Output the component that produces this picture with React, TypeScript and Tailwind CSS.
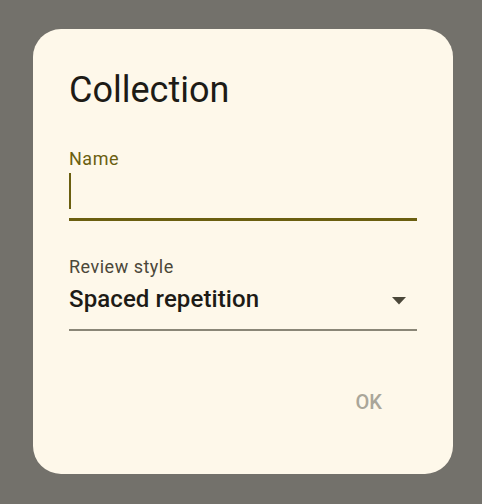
import { useState } from 'react';

const options = ['Spaced repetition', 'Sequential', 'Random'];

const App = () => {
    const [name, setName] = useState('');
    const [style] = useState(options[0]);

    return (
        <div className="w-[482px] h-[504px] bg-[#73716b] pt-[29px] pl-[33px] font-['Roboto',sans-serif]">
            <div className="w-[420px] h-[445px] bg-[#fef8ea] rounded-[28px] pt-[39px] px-9 flex flex-col">
                <h1 className="text-[36px] leading-[44px] text-[#1d1b16] font-normal">Collection</h1>

                <div className="mt-[35px] flex flex-col">
                    <label className="text-[18px] leading-[24px] text-[#6b5f10] tracking-[0.5px]">Name</label>
                    <div className="relative h-[50px] border-b-[3px] border-[#6b5f10]">
                        <input
                            className="w-full h-full bg-transparent outline-none text-[20px] text-[#1d1b16] caret-transparent"
                            value={name}
                            onChange={(e) => setName(e.currentTarget.value)}
                        />
                        <span className="absolute left-0 top-[2px] w-[2px] h-[36px] bg-[#6b5f10]" />
                    </div>
                </div>

                <div className="mt-[34px] flex flex-col">
                    <label className="text-[18px] leading-[24px] text-[#4b4739] tracking-[0.5px]">Review style</label>
                    <div className="mt-[4px] flex items-start justify-between pb-[14px] border-b-2 border-[#8a8677]">
                        <span className="text-[24px] leading-[32px] font-medium text-[#1d1b16] tracking-[0.1px]">{style}</span>
                        <svg width="14" height="8" viewBox="0 0 14 8" className="mr-[11px] mt-[14px]">
                            <path d="M0 0 L14 0 L7 7.5 Z" fill="#4b4739" />
                        </svg>
                    </div>
                </div>

                <div className="mt-[57px] flex justify-end">
                    <button className="text-[20px] leading-[28px] font-medium text-[#aaa699] mr-[35px]">OK</button>
                </div>
            </div>
        </div>
    );
};

export default App;
